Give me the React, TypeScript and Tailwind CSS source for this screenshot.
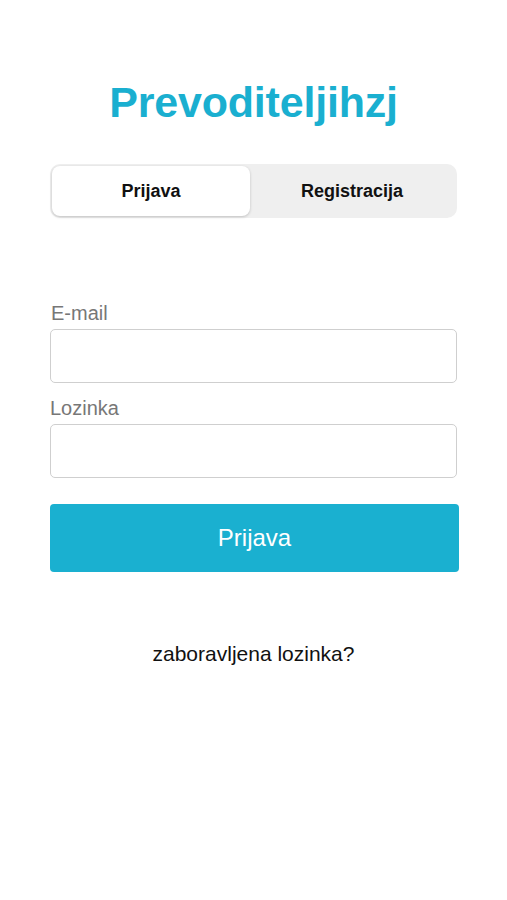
export default function App() {
  return (
    <div className="min-h-[900px] w-full bg-white font-['Liberation_Sans',Arial,sans-serif]">
      {/* Title */}
      <div className="pt-[76px] text-center">
        <h1 className="text-[43px] font-bold leading-[52px] tracking-[-0.2px] text-[#1aafd0]">
          Prevoditeljihzj
        </h1>
      </div>

      {/* Segmented control */}
      <div className="mx-[50px] mt-[36px] flex h-[54px] rounded-[10px] bg-[#efefef] p-[2px]">
        <button className="w-[198px] rounded-[8px] bg-white text-[18px] font-bold text-[#111] shadow-[0_1px_3px_rgba(0,0,0,0.2)]">
          Prijava
        </button>
        <button className="flex-1 pr-[1px] text-[18px] font-bold text-[#111]">
          Registracija
        </button>
      </div>

      {/* Form */}
      <form className="mx-[50px] mt-[83px]">
        <label className="block pl-[1px] text-[20px] leading-[24px] text-[#777]">E-mail</label>
        <input
          type="email"
          className="mt-[4px] block h-[54px] w-[407px] rounded-[5px] border border-[#cfcfcf] bg-white px-3 outline-none"
        />
        <label className="mt-[13px] block text-[20px] leading-[24px] text-[#777]">Lozinka</label>
        <input
          type="password"
          className="mt-[4px] block h-[54px] w-[407px] rounded-[5px] border border-[#cfcfcf] bg-white px-3 outline-none"
        />
        <button
          type="button"
          className="mt-[26px] flex h-[68px] w-[409px] items-center justify-center rounded-[4px] bg-[#1ab0d0] text-[24px] text-white"
        >
          Prijava
        </button>
      </form>

      {/* Forgot password */}
      <p className="mt-[66px] text-center text-[21px] text-[#111]">zaboravljena lozinka?</p>
    </div>
  )
}
